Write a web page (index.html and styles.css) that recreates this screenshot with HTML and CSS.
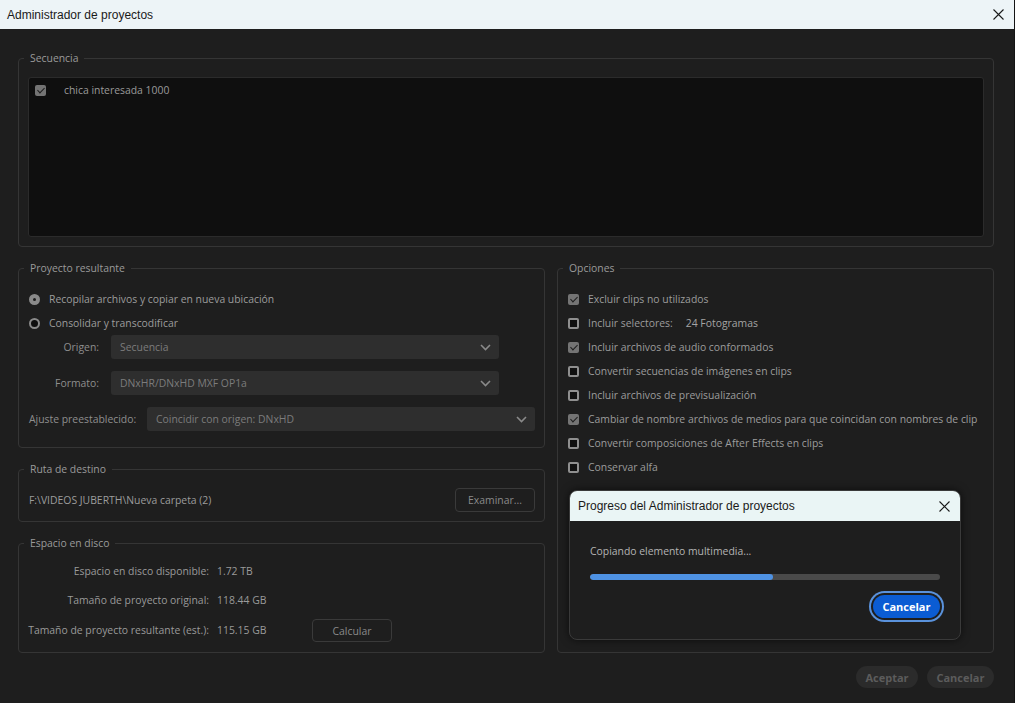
FILE: index.html
```html
<!DOCTYPE html>
<html lang="es">
<head>
<meta charset="utf-8">
<title>Administrador de proyectos</title>
<link rel="stylesheet" href="styles.css">
</head>
<body>
<div class="window">
  <div class="titlebar">
    <span class="title">Administrador de proyectos</span>
    <svg class="close" width="11" height="11" viewBox="0 0 11 11"><path d="M0.5 0.5L10.5 10.5M10.5 0.5L0.5 10.5" stroke="#1a1a1a" stroke-width="1.1" fill="none"/></svg>
  </div>
  <div class="content">
    <fieldset class="group seq">
      <legend>Secuencia</legend>
      <div class="seqlist">
        <div class="seqrow"><span class="cb on"></span><span class="seqname">chica interesada 1000</span></div>
      </div>
    </fieldset>
    <div class="cols">
      <div class="leftcol">
        <fieldset class="group proj">
          <legend>Proyecto resultante</legend>
          <div class="rrow"><span class="radio on"></span><span>Recopilar archivos y copiar en nueva ubicación</span></div>
          <div class="rrow"><span class="radio"></span><span>Consolidar y transcodificar</span></div>
          <div class="frow">
            <span class="flabel">Origen:</span>
            <div class="select"><span>Secuencia</span><svg width="11" height="7" viewBox="0 0 11 7"><path d="M1 1L5.5 5.5L10 1" stroke="#8a8a8a" stroke-width="1.6" fill="none"/></svg></div>
          </div>
          <div class="frow">
            <span class="flabel">Formato:</span>
            <div class="select"><span>DNxHR/DNxHD MXF OP1a</span><svg width="11" height="7" viewBox="0 0 11 7"><path d="M1 1L5.5 5.5L10 1" stroke="#8a8a8a" stroke-width="1.6" fill="none"/></svg></div>
          </div>
          <div class="frow">
            <span class="flabel wide">Ajuste preestablecido:</span>
            <div class="select"><span>Coincidir con origen: DNxHD</span><svg width="11" height="7" viewBox="0 0 11 7"><path d="M1 1L5.5 5.5L10 1" stroke="#8a8a8a" stroke-width="1.6" fill="none"/></svg></div>
          </div>
        </fieldset>
        <fieldset class="group ruta">
          <legend>Ruta de destino</legend>
          <div class="rutarow">
            <span>F:\VIDEOS JUBERTH\Nueva carpeta (2)</span>
            <button class="btn">Examinar...</button>
          </div>
        </fieldset>
        <fieldset class="group disk">
          <legend>Espacio en disco</legend>
          <div class="diskgrid">
            <div class="dlabel"><span>Espacio en disco disponible:</span></div><span class="dval">1.72 TB</span><span></span>
            <div class="dlabel"><span>Tamaño de proyecto original:</span></div><span class="dval">118.44 GB</span><span></span>
            <div class="dlabel"><span>Tamaño de proyecto resultante (est.):</span></div><span class="dval">115.15 GB</span><button class="btn">Calcular</button>
          </div>
        </fieldset>
      </div>
      <fieldset class="group opts">
        <legend>Opciones</legend>
        <div class="orow"><span class="cb on"></span><span>Excluir clips no utilizados</span></div>
        <div class="orow"><span class="cb"></span><span>Incluir selectores:</span><span class="frames">24 Fotogramas</span></div>
        <div class="orow"><span class="cb on"></span><span>Incluir archivos de audio conformados</span></div>
        <div class="orow"><span class="cb"></span><span>Convertir secuencias de imágenes en clips</span></div>
        <div class="orow"><span class="cb"></span><span>Incluir archivos de previsualización</span></div>
        <div class="orow"><span class="cb on"></span><span>Cambiar de nombre archivos de medios para que coincidan con nombres de clip</span></div>
        <div class="orow"><span class="cb"></span><span>Convertir composiciones de After Effects en clips</span></div>
        <div class="orow"><span class="cb"></span><span>Conservar alfa</span></div>
      </fieldset>
    </div>
    <div class="footer">
      <button class="pill accept">Aceptar</button>
      <button class="pill cancel">Cancelar</button>
    </div>
  </div>

  <div class="progress">
    <div class="ptitle">
      <span>Progreso del Administrador de proyectos</span>
      <svg width="11" height="11" viewBox="0 0 11 11"><path d="M0.5 0.5L10.5 10.5M10.5 0.5L0.5 10.5" stroke="#1a1a1a" stroke-width="1.1" fill="none"/></svg>
    </div>
    <div class="pbody">
      <div class="pmsg">Copiando elemento multimedia...</div>
      <div class="pbar"><div class="pfill" style="width:52.4%"></div></div>
      <div class="pactions"><button class="bluebtn">Cancelar</button></div>
    </div>
  </div>
</div>
</body>
</html>
```
FILE: styles.css
```css
* { box-sizing: border-box; }
html, body { margin: 0; padding: 0; }
body {
  width: 1015px;
  height: 703px;
  overflow: hidden;
  background: #1e1e1e;
  font-family: "Open Sans", "Noto Sans", sans-serif;
  font-size: 10.4px;
  color: #9c9c9c;
}
.window {
  position: relative;
  width: 1015px;
  height: 703px;
  border-right: 1px solid #141414;
}
.titlebar {
  height: 29px;
  background: #edf4f7;
  display: flex;
  align-items: center;
  justify-content: space-between;
  padding: 0 10px 0 7px;
  font-family: "Liberation Sans", Arial, sans-serif;
  font-size: 12px;
  color: #1a1a1a;
}
.content {
  padding: 22px 20px 0 18px;
  display: flex;
  flex-direction: column;
}
.group {
  margin: 0;
  border: 1px solid #353535;
  border-radius: 4px;
  padding: 12px 9px 9px 10px;
  min-width: 0;
}
.group legend {
  padding: 0 6px;
  margin-left: -5px;
  line-height: 14px;
  color: #9a9a9a;
}
.seq { padding: 12px 9px 9px 9px; }
.seq legend { margin-left: -4px; }
.seqlist {
  height: 160px;
  background: #0f0f0f;
  border: 1px solid #2b2b2b;
  border-radius: 3px;
  padding: 4px 0 0 6px;
}
.seqrow {
  display: flex;
  align-items: center;
  height: 16px;
  color: #9a9a9a;
}
.seqname { margin-left: 18px; }

.cb {
  width: 11px;
  height: 11px;
  border-radius: 2px;
  border: 2px solid #8f8f8f;
  background: #101010;
  flex: none;
  position: relative;
}
.cb.on {
  border: none;
  background: #747474;
}
.cb.on::after {
  content: "";
  position: absolute;
  left: 3.5px;
  top: 1.5px;
  width: 3px;
  height: 6px;
  border-right: 1.6px solid #1e1e1e;
  border-bottom: 1.6px solid #1e1e1e;
  transform: rotate(45deg);
}
.radio {
  width: 11px;
  height: 11px;
  border-radius: 50%;
  border: 2px solid #8a8a8a;
  background: #0e0e0e;
  flex: none;
  position: relative;
}
.radio.on {
  border: none;
  background: #8a8a8a;
}
.radio.on::after {
  content: "";
  position: absolute;
  left: 4px;
  top: 4px;
  width: 3px;
  height: 3px;
  border-radius: 50%;
  background: #1e1e1e;
}

.cols {
  display: flex;
  gap: 12px;
  margin-top: 14px;
  height: 392px;
}
.leftcol {
  width: 527px;
  display: flex;
  flex-direction: column;
  gap: 14px;
}
.proj { padding: 12px 9px 16px 10px; }
.rrow {
  display: flex;
  align-items: center;
  height: 24px;
  gap: 9px;
  color: #9c9c9c;
}
.frow {
  display: flex;
  align-items: center;
  height: 24px;
  margin-bottom: 12px;
}
.frow:last-child { margin-bottom: 0; }
.flabel {
  width: 70px;
  text-align: right;
  margin-right: 12px;
  color: #8e8e8e;
  white-space: nowrap;
}
.flabel.wide { width: 106px; }
.select {
  width: 388px;
  height: 24px;
  background: #2e2e2e;
  border-radius: 3px;
  display: flex;
  align-items: center;
  justify-content: space-between;
  padding: 0 8px 0 9px;
  color: #7c7c7c;
}
.ruta { padding: 12px 9px 9px 10px; }
.rutarow {
  display: flex;
  align-items: center;
  justify-content: space-between;
  height: 24px;
  color: #9c9c9c;
}
.btn {
  width: 80px;
  height: 24px;
  background: #1e1e1e;
  border: 1px solid #3a3a3a;
  border-radius: 4px;
  color: #8a8a8a;
  font-family: inherit;
  font-size: 10.4px;
  padding: 0;
}
.disk { flex: 1; padding: 10px 9px 8px 10px; }
.diskgrid {
  display: grid;
  grid-template-columns: 188px 95px 80px;
  grid-template-rows: 22px 22px 23px;
  row-gap: 7px;
  column-gap: 0;
  align-items: center;
}
.diskgrid .btn { height: 23px; margin-top: 2px; }
.dlabel {
  display: flex;
  justify-content: flex-end;
  padding-right: 8px;
  white-space: nowrap;
  color: #9a9a9a;
}
.dval { color: #9a9a9a; }

.opts {
  flex: 1;
  padding: 12px 9px 9px 10px;
}
.orow {
  display: flex;
  align-items: center;
  height: 24px;
  gap: 9px;
  color: #9c9c9c;
  white-space: nowrap;
}
.frames { margin-left: 4px; color: #a4a4a4; }

.footer {
  display: flex;
  justify-content: flex-end;
  gap: 9px;
  margin-top: 13px;
}
.pill {
  height: 22px;
  border: none;
  border-radius: 11px;
  background: #2b2b2b;
  color: #5c5c5c;
  font-family: inherit;
  font-size: 11px;
  font-weight: 700;
  padding: 0;
}
.accept { width: 62px; }
.cancel { width: 67px; }

.progress {
  position: absolute;
  left: 569px;
  top: 490px;
  width: 392px;
  height: 150px;
  border: 1px solid #3a3a3a;
  border-radius: 8px;
  background: #1e1e1e;
  overflow: hidden;
  box-shadow: 0 0 8px rgba(0,0,0,0.6);
}
.ptitle {
  height: 30px;
  background: #eaf5f5;
  display: flex;
  align-items: center;
  justify-content: space-between;
  padding: 0 10px 0 8px;
  font-family: "Liberation Sans", Arial, sans-serif;
  font-size: 12px;
  color: #1a1a1a;
}
.pbody {
  padding: 21px 20px 0 20px;
}
.pmsg {
  height: 18px;
  line-height: 18px;
  color: #b4b4b4;
}
.pbar {
  margin-top: 14px;
  height: 6px;
  border-radius: 3px;
  background: #4a4a4a;
  overflow: hidden;
}
.pfill {
  height: 100%;
  background: #4e92e4;
  border-radius: 3px;
}
.pactions {
  display: flex;
  justify-content: flex-end;
  margin-top: 15px;
}
.bluebtn {
  width: 67px;
  height: 23px;
  border: none;
  border-radius: 12px;
  background: #0b5cd3;
  color: #ffffff;
  font-family: inherit;
  font-size: 11px;
  font-weight: 700;
  padding: 0;
  box-shadow: 0 0 0 2px #1e1e1e, 0 0 0 4px #5a92dc;
}
```
